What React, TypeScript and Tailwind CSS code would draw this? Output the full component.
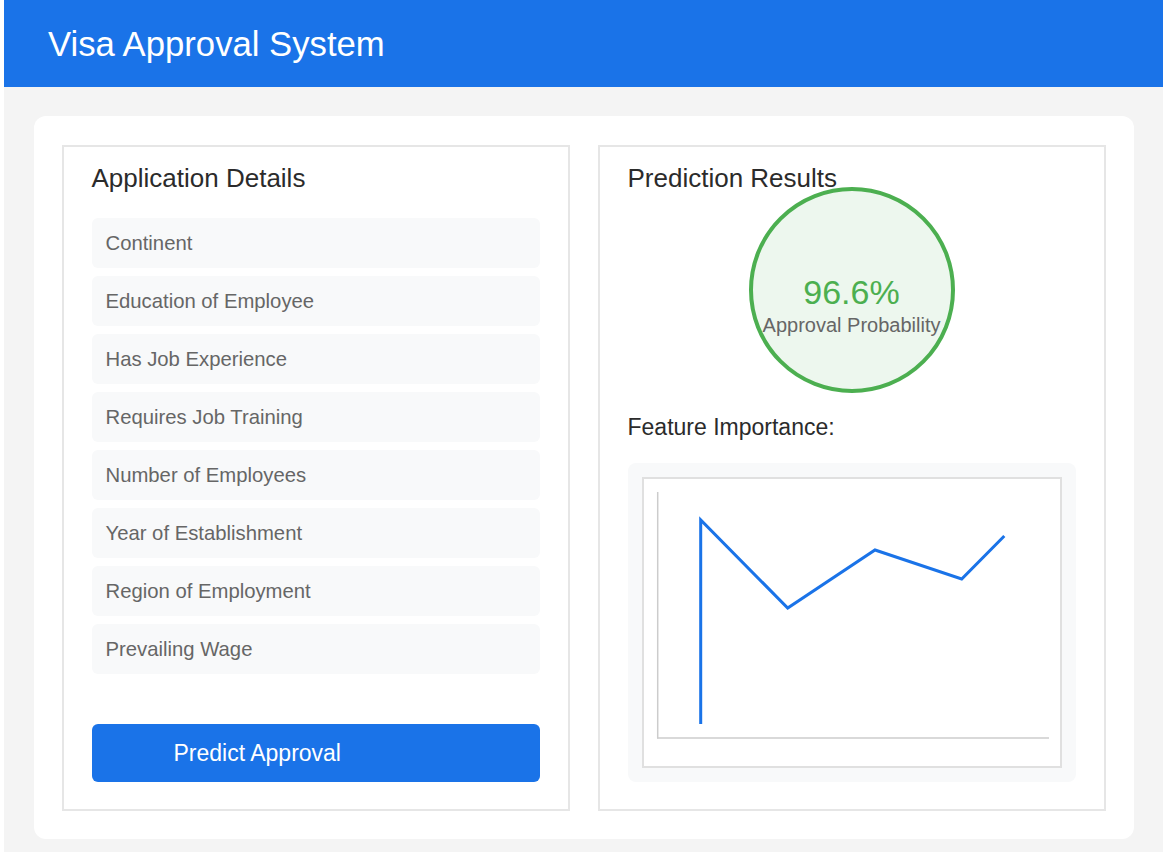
import React from "react";

const fields = [
  "Continent",
  "Education of Employee",
  "Has Job Experience",
  "Requires Job Training",
  "Number of Employees",
  "Year of Establishment",
  "Region of Employment",
  "Prevailing Wage",
];

function Chart() {
  const pts = [
    [699.7, 724],
    [699.7, 520],
    [786.7, 608],
    [874, 550],
    [960.7, 579],
    [1003.3, 536],
  ];
  return (
    <svg
      width="417"
      height="287"
      viewBox="643 479 417 287"
      className="block"
    >
      <line x1="656.7" y1="492" x2="656.7" y2="738.5" stroke="#cccccc" strokeWidth="1.5" />
      <line x1="656" y1="738" x2="1048" y2="738" stroke="#cccccc" strokeWidth="1.5" />
      <polyline
        points={pts.map((p) => p.join(",")).join(" ")}
        fill="none"
        stroke="#1a73e8"
        strokeWidth="3"
        strokeLinejoin="miter"
      />
    </svg>
  );
}

export default function App() {
  return (
    <div
      className="min-h-screen flex flex-col bg-white pl-[4px] pr-[5px]"
      style={{ fontFamily: '"Liberation Sans", Arial, sans-serif' }}
    >
      <header className="h-[87px] bg-[#1a73e8] flex items-center pl-[44px]">
        <h1 className="text-[34.7px] leading-[40px] text-white font-normal">
          Visa Approval System
        </h1>
      </header>
      <main className="flex-1 bg-[#f4f4f4] pt-[29px] pb-[13px]">
        <div className="max-w-[1100px] mx-auto bg-white rounded-[12px] pt-[29px] px-[28px] pb-[28px]">
          <div className="grid grid-cols-2 gap-[28px]">
            {/* Left panel */}
            <section className="border-2 border-[#e6e6e6] px-[28px] pt-[16px] pb-[27px] flex flex-col">
              <h2 className="text-[26px] leading-[30px] text-[#2b2b2b] font-normal mb-[25px]">
                Application Details
              </h2>
              <div className="flex flex-col gap-[8px]">
                {fields.map((f) => (
                  <div
                    key={f}
                    className="h-[50px] bg-[#f8f9fa] rounded-[6px] px-[14px] flex items-center text-[20.3px] leading-[24px] text-[#666666]"
                  >
                    {f}
                  </div>
                ))}
              </div>
              <button className="mt-[50px] h-[58px] bg-[#1a73e8] rounded-[6px] text-white text-[23px] leading-[26px] flex items-center pl-[82px]">
                Predict Approval
              </button>
            </section>
            {/* Right panel */}
            <section className="border-2 border-[#e6e6e6] px-[28px] pt-[16px] pb-[27px] flex flex-col">
              <h2 className="text-[26px] leading-[30px] text-[#2b2b2b] font-normal">
                Prediction Results
              </h2>
              <div className="mt-[-6px] mx-auto w-[206px] h-[206px] rounded-full border-[4px] border-[#4caf50] bg-[#edf7ee] flex flex-col items-center pt-[82px]">
                <div className="text-[34px] leading-[39px] text-[#4caf50]">96.6%</div>
                <div className="mt-[2px] text-[20px] leading-[23px] text-[#666666] whitespace-nowrap">
                  Approval Probability
                </div>
              </div>
              <h3 className="mt-[21px] text-[23px] leading-[26px] text-[#2b2b2b] font-normal">
                Feature Importance:
              </h3>
              <div className="mt-[23px] h-[319px] bg-[#f8f9fa] rounded-[8px] p-[14px]">
                <div className="border-2 border-[#e0e0e0] bg-white h-full">
                  <Chart />
                </div>
              </div>
            </section>
          </div>
        </div>
      </main>
    </div>
  );
}
